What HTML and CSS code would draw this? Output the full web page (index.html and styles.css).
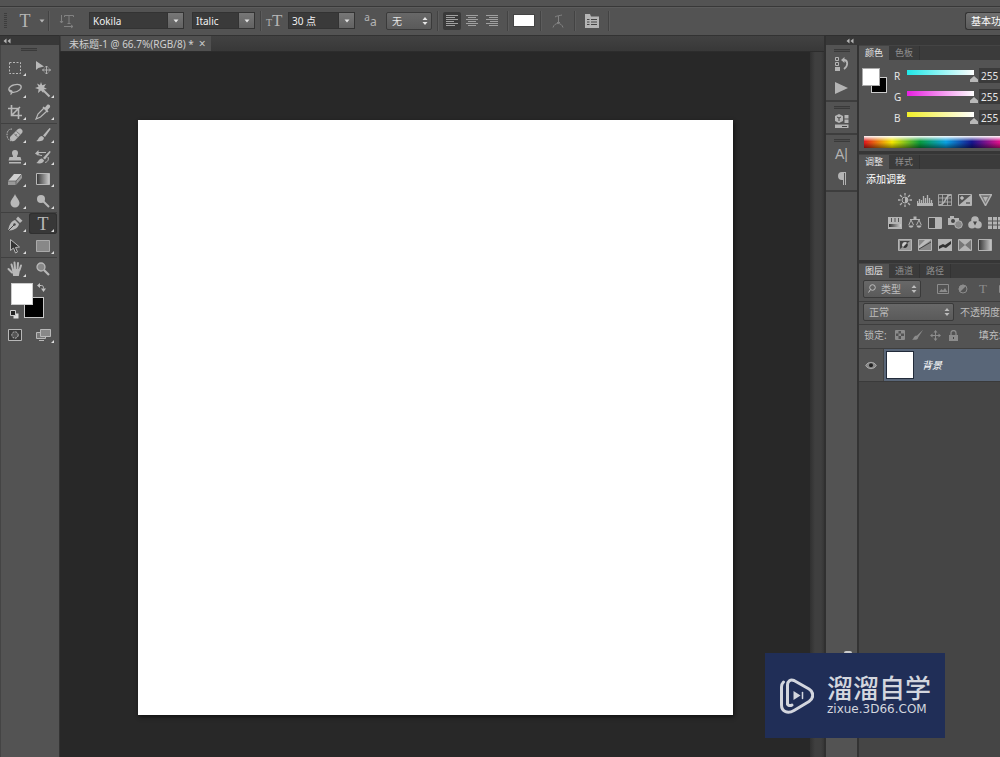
FILE: index.html
```html
<!DOCTYPE html>
<html lang="zh-CN">
<head>
<meta charset="utf-8">
<title>未标题-1 @ 66.7%(RGB/8)</title>
<link rel="stylesheet" href="styles.css">
</head>
<body>
<svg class="defs" aria-hidden="true">
  <defs>
    <linearGradient id="fade"><stop offset="0" stop-color="#333"/><stop offset="1" stop-color="#ccc"/></linearGradient>
  </defs>
  <symbol id="spin" viewBox="0 0 6 8"><path d="M3 0l2.500 3h-5zM3 8L.5 5h5z" fill="currentColor"/></symbol>
  <symbol id="down" viewBox="0 0 6 4"><path d="M.5.5h5L3 3.500z" fill="currentColor"/></symbol>
  <symbol id="rewind" viewBox="0 0 8 6"><path d="M3.500 .5v5L.5 3zM7.500 .5v5l-3-2.500z" fill="currentColor"/></symbol>
</svg>
<div class="app">
  <div class="menu-edge"></div>
  <header class="options">
    <span class="grip-v"></span>
    <button class="opt tool-pick" aria-label="横排文字工具"><span class="serif big">T</span><svg width="6" height="4"><use href="#down"/></svg></button>
    <i class="rule"></i>
    <button class="opt orient dim" aria-label="切换文本取向"><svg width="16" height="16" viewBox="0 0 16 16" fill="none" stroke="currentColor"><path d="M2.500 2v8m-1.500-2l1.500 2 1.500-2M5.500 4V2.500h9V4M10 2.500v8M8.500 10.500h3M5 13.500h9m-2-1.500l2 1.500-2 1.500"/></svg></button>
    <div class="combo family"><input aria-label="字体" value="Kokila"><button aria-label="字体列表"><svg width="6" height="4"><use href="#down"/></svg></button></div>
    <div class="combo style"><input aria-label="字体样式" value="Italic"><button aria-label="样式列表"><svg width="6" height="4"><use href="#down"/></svg></button></div>
    <i class="rule"></i>
    <span class="opt size-icon serif"><small>T</small>T</span>
    <div class="combo size"><input aria-label="字号" value="30 点"><button aria-label="字号列表"><svg width="6" height="4"><use href="#down"/></svg></button></div>
    <span class="opt aa-icon"><sup>a</sup>a</span>
    <span class="pick alias"><select aria-label="消除锯齿"><option>无</option></select><svg width="6" height="8"><use href="#spin"/></svg></span>
    <i class="rule"></i>
    <div class="aligns">
      <button class="on" aria-label="左对齐"><svg width="12" height="12" viewBox="0 0 12 12" stroke="currentColor"><path d="M0 .5h12M0 2.500h9M0 4.500h12M0 6.500h8M0 8.500h12M0 10.500h9"/></svg></button>
      <button aria-label="居中"><svg width="12" height="12" viewBox="0 0 12 12" stroke="currentColor"><path d="M0 .5h12M2 2.500h8M0 4.500h12M2 6.500h8M0 8.500h12M2 10.500h8"/></svg></button>
      <button aria-label="右对齐"><svg width="12" height="12" viewBox="0 0 12 12" stroke="currentColor"><path d="M0 .5h12M3 2.500h9M0 4.500h12M4 6.500h8M0 8.500h12M3 10.500h9"/></svg></button>
    </div>
    <i class="rule"></i>
    <button class="text-color" aria-label="文本颜色"></button>
    <i class="rule"></i>
    <button class="opt warp dim" aria-label="变形文字"><svg width="12" height="14" viewBox="0 0 12 14" fill="none" stroke="currentColor"><path d="M3 3c1-1 5-1.500 7-2M6.500 2v6M5 8.500h3M1 13.500c1-3 3-4 5-4s4 1 5 4" /></svg></button>
    <i class="rule"></i>
    <button class="opt panels" aria-label="字符和段落面板"><svg width="14" height="14" viewBox="0 0 14 14"><path d="M0 0h5l1 2.500h8V14H0z" fill="currentColor"/><path d="M2 5.500h2.500M6 5.500h6M2 8h2.500M6 8h6M2 10.500h2.500M6 10.500h6" stroke="#444"/></svg></button>
    <i class="rule"></i>
    <button class="workspace">基本功能</button>
  </header>

  <div class="work">
    <aside class="toolbox">
      <div class="strip"><svg width="8" height="6"><use href="#rewind"/></svg></div>
      <div class="tools">
        <span class="grip"></span>
        <div class="group first">
          <button class="more" aria-label="矩形选框"><svg width="16" height="16" viewBox="0 0 16 16"><path d="M2.500 2.500h11v11h-11z" fill="none" stroke="currentColor" stroke-dasharray="2 1.500"/></svg></button>
          <button aria-label="移动"><svg width="16" height="16" viewBox="0 0 16 16"><path d="M1 1v9l2.300-2L9 6.500z" fill="currentColor"/><path d="M11.500 6v8M7.500 10h8M10 7.500L11.500 6 13 7.500M10 12.500l1.500 1.500 1.500-1.500M9 8.500L7.500 10 9 11.500M14 8.500l1.500 1.500-1.500 1.500" fill="none" stroke="currentColor" stroke-width=".9"/></svg></button>
          <button class="more" aria-label="套索"><svg width="16" height="16" viewBox="0 0 16 16" fill="none" stroke="currentColor" stroke-width="1.300"><path d="M4 10C0 8 2 4 7 2.800s8 .2 7 3.200-6 5-10 4c-2-.5-1.500-2 0-1.500s1.500 2-.5 4"/></svg></button>
          <button class="more" aria-label="魔棒"><svg width="16" height="16" viewBox="0 0 16 16"><path d="M6 0l1.200 3.300L11 2 9 5.200l3 1.800-3.500.6L8.300 11 6 8.500 3 11l.6-3.700L0 6l3.500-1.200L2 1.500l3 1.600z" fill="currentColor"/><path d="M7 7l7.500 7.500" stroke="currentColor" stroke-width="2"/></svg></button>
          <button class="more" aria-label="裁剪"><svg width="16" height="16" viewBox="0 0 16 16" fill="none" stroke="currentColor" stroke-width="1.600"><path d="M4.500 1v10.500H15M1 4.500h10.500V15M5 11L13 3"/></svg></button>
          <button class="more" aria-label="吸管"><svg width="16" height="16" viewBox="0 0 16 16"><path d="M9 4L3 10l-2 5 4.500-2L12 7" fill="none" stroke="currentColor" stroke-width="1.200"/><path d="M7.500 3.500l1-1 1.500 1L12 1c2-1.500 4 .8 2.800 2.600L12.500 6l1 1.500-1 1z" fill="currentColor"/></svg></button>
        </div>
        <div class="group">
          <button class="more" aria-label="修复画笔"><svg width="18" height="16" viewBox="0 0 18 16"><path d="M6 2C2 2 1 5 1 8s2 6 5 6" fill="none" stroke="currentColor" stroke-dasharray="1.500 1"/><path d="M4.500 9.500l7.500-7.500c2.500-2 6 1.500 4 4L9 13.500c-3 2.300-6.500-1-4.500-4z" fill="currentColor"/><path d="M8 6.500l4 4M10.500 4.500l4 3.500M9 8.500l2-1" stroke="#666" stroke-width=".8"/></svg></button>
          <button class="more" aria-label="画笔"><svg width="16" height="16" viewBox="0 0 16 16" fill="currentColor"><path d="M14.500 1c1 0 1.300.8 1 1.300L10 10 8 8.500zM7 9l2 1.800c0 3-3.500 4.200-8 3.200C3.500 13.500 3.500 9 7 9z"/></svg></button>
          <button class="more" aria-label="仿制图章"><svg width="14" height="16" viewBox="0 0 14 16" fill="currentColor"><path d="M5 8c0-2-1-2-1-4a3 3 0 016 0c0 2-1 2-1 4h3.500l1 3.500H.5l1-3.500zM1 13h12v1.500H1z"/></svg></button>
          <button class="more" aria-label="历史记录画笔"><svg width="16" height="16" viewBox="0 0 16 16" fill="currentColor"><path d="M14.500 2c1 0 1.300.8 1 1.300L10 10.500 8 9zM7 9.500l2 1.800c0 2.700-3.500 3.700-8 2.700C3.500 13.500 3.500 9.500 7 9.500z"/><path d="M3 3.500h8M3 3.500c0 2 1 3 4 3M13 8c1 3-.5 5-3 5.500" fill="none" stroke="currentColor"/><path d="M0 4.500L3.500 1v6z"/></svg></button>
          <button class="more" aria-label="橡皮擦"><svg width="16" height="14" viewBox="0 0 16 14"><path d="M7 2h8L9 9H1z" fill="#d0d0d0"/><path d="M1 9h8v4H1zM9 9l6-7v4l-6 7z" fill="#999"/><path d="M1 9h8v4M9 9l6-7" fill="none" stroke="#555" stroke-width=".7"/></svg></button>
          <button class="more" aria-label="渐变"><svg width="14" height="12" viewBox="0 0 14 12"><path d="M.5.5h13v11H.5z" fill="url(#fade)" stroke="currentColor"/></svg></button>
          <button class="more" aria-label="模糊"><svg width="12" height="14" viewBox="0 0 12 14"><path d="M6 0c1 3 4.500 6 4.500 9a4.500 4.500 0 01-9 0c0-3 3.500-6 4.500-9z" fill="currentColor"/></svg></button>
          <button class="more" aria-label="减淡"><svg width="14" height="14" viewBox="0 0 14 14"><circle cx="5" cy="5" r="4" fill="currentColor"/><path d="M7.500 7.500L13 13" stroke="currentColor" stroke-width="2"/></svg></button>
        </div>
        <div class="group">
          <button class="more" aria-label="钢笔"><svg width="16" height="16" viewBox="0 0 16 16"><path d="M1 15C2 10 3 6 8 4l4 4c-1 5-6 6-11 7zM9 3l2-2.500 4.500 4.200L13 7z" fill="currentColor"/><path d="M1 15l6-6" stroke="#444"/><circle cx="7.500" cy="8.500" r="1.200" fill="#444"/></svg></button>
          <button class="more on" aria-label="横排文字"><span class="serif big">T</span></button>
          <button class="more" aria-label="路径选择"><svg width="12" height="16" viewBox="0 0 12 16"><path d="M1.500 1.500v11l3-2.500 2 5 2-1-2-4.500 4-.5z" fill="#333" stroke="currentColor"/></svg></button>
          <button class="more" aria-label="矩形"><svg width="14" height="12" viewBox="0 0 14 12"><path d="M.5.5h13v11H.5z" fill="#888" stroke="#aaa"/></svg></button>
        </div>
        <div class="group last">
          <button class="more" aria-label="抓手"><svg width="16" height="16" viewBox="0 0 16 16" fill="none" stroke="currentColor" stroke-width="2" stroke-linecap="round"><path d="M4.500 3.500L6 8.500M7.500 1.500l.5 6M11 2l-.5 6M14 4.500L12.500 9M1.500 8L5 11.500"/><path d="M6 9h6l-1 5H7z" fill="currentColor"/></svg></button>
          <button aria-label="缩放"><svg width="14" height="14" viewBox="0 0 14 14"><circle cx="5" cy="5" r="4" fill="#888" stroke="currentColor" stroke-width="1.300"/><path d="M8 8l5 5" stroke="currentColor" stroke-width="2.200"/></svg></button>
        </div>
        <div class="colors">
          <button class="back" aria-label="背景色"></button>
          <button class="fore" aria-label="前景色"></button>
          <svg class="swap" width="9" height="9" viewBox="0 0 9 9"><path d="M2 2.500h2.500c1.500 0 2 1 2 3" fill="none" stroke="currentColor"/><path d="M0 2.500L3 0v5zM4 5.500h5L6.500 9z" fill="currentColor"/></svg>
          <svg class="reset" width="9" height="9" viewBox="0 0 9 9"><path d="M3.500 3.500h5v5h-5z" fill="#ddd"/><path d="M.5.5h5v5h-5z" fill="#222" stroke="#ccc"/></svg>
        </div>
        <div class="group last modes">
          <button aria-label="快速蒙版"><svg width="14" height="12" viewBox="0 0 14 12"><path d="M.5.5h13v11H.5z" fill="#3a3a3a" stroke="currentColor"/><circle cx="7" cy="6" r="3.200" fill="#555" stroke="currentColor" stroke-dasharray="2 1"/></svg></button>
          <button class="more" aria-label="屏幕模式"><svg width="15" height="12" viewBox="0 0 15 12"><path d="M.5 3.500h9v6h-9zM3 11.500h5" fill="#777" stroke="currentColor"/><path d="M4.500.5h10v7h-10z" fill="#888" stroke="currentColor"/></svg></button>
        </div>
      </div>
    </aside>

    <main class="document">
      <div class="tabs"><div class="tab">未标题-1 @ 66.7%(RGB/8) * <button aria-label="关闭">×</button></div></div>
      <div class="stage">
        <div class="pasteboard"><div class="canvas"></div></div>
        <div class="scroll"></div>
      </div>
    </main>

    <aside class="dock">
      <div class="strip"><svg width="8" height="6"><use href="#rewind"/></svg></div>
      <div class="columns">
        <nav class="icons">
          <div class="set"><span class="grip"></span>
            <button aria-label="历史记录"><svg width="14" height="14" viewBox="0 0 14 14"><path d="M.5.5h3v3h-3zM.5 5.500h3v3h-3z" fill="none" stroke="currentColor"/><path d="M0 10h5v4H0zM6 3l3.500-3v6z" fill="currentColor"/><path d="M9 3c4 0 4.500 6 0 9" fill="none" stroke="currentColor" stroke-width="1.800"/></svg></button>
            <button aria-label="动作"><svg width="13" height="12" viewBox="0 0 13 12"><path d="M0 0l13 6-13 6z" fill="currentColor"/></svg></button>
          </div>
          <div class="set"><span class="grip"></span>
            <button aria-label="属性"><svg width="14" height="14" viewBox="0 0 14 14" fill="currentColor"><path d="M4 0l4 2v5L4 9 0 7V2z"/><path d="M2 3l2 1 2-1M4 4v3" fill="none" stroke="#444"/><path d="M9.500 1h4v3.500h-4zM9.500 5.500h4V9h-4zM0 10.500h13.500V14H0z"/><path d="M7 12.500h5" stroke="#444"/></svg></button>
          </div>
          <div class="set"><span class="grip"></span>
            <button aria-label="字符">A|</button>
            <button aria-label="段落"><svg width="9" height="13" viewBox="0 0 9 13"><path d="M5 0h4v13H8V1H7v12H6V8H5a4 4 0 010-8z" fill="currentColor"/></svg></button>
          </div>
        </nav>

        <div class="panels-col">
          <section class="panel">
            <div class="panel-tabs"><button class="on">颜色</button><button>色板</button></div>
            <div class="color-body">
              <div class="pair"><button class="back" aria-label="背景色"></button><button class="fore" aria-label="前景色"></button></div>
              <div class="channels">
                <div class="channel"><label for="r">R</label><input id="r" class="cyan" type="range" max="255" value="255"><input aria-label="R 值" value="255"></div>
                <div class="channel"><label for="g">G</label><input id="g" class="magenta" type="range" max="255" value="255"><input aria-label="G 值" value="255"></div>
                <div class="channel"><label for="b">B</label><input id="b" class="yellow" type="range" max="255" value="255"><input aria-label="B 值" value="255"></div>
              </div>
            </div>
            <div class="spectrum"></div>
          </section>

          <section class="panel">
            <div class="panel-tabs"><button class="on">调整</button><button>样式</button></div>
            <h2>添加调整</h2>
            <div class="adjust">
              <button aria-label="亮度/对比度"><svg width="14" height="14" viewBox="0 0 14 14"><circle cx="7" cy="7" r="3" fill="none" stroke="currentColor"/><path d="M7 4a3 3 0 010 6z" fill="currentColor"/><path d="M7 0v2.500M7 11.500V14M0 7h2.500M11.500 7H14M2 2l2 2M10 10l2 2M12 2l-2 2M4 10l-2 2" stroke="currentColor" stroke-width="1.300"/></svg></button>
              <button aria-label="色阶"><svg width="16" height="11" viewBox="0 0 16 11"><path d="M.5 9V6M2.500 9V4M4.500 9V5M6.500 9V1M8.500 9V3M10.500 9V0M12.500 9V3M14.500 9V5" stroke="currentColor" stroke-width="1.300"/><path d="M0 8h16v3H0z" fill="currentColor"/></svg></button>
              <button aria-label="曲线"><svg width="14" height="12" viewBox="0 0 14 12" fill="none" stroke="currentColor"><path d="M.5.5h13v11H.5zM.5 4h13M.5 8h13M4.500.5v11M9.500.5v11" stroke-width=".8"/><path d="M1 11c8 0 5-10 12-10" stroke-width="1.500"/></svg></button>
              <button aria-label="曝光度"><svg width="14" height="12" viewBox="0 0 14 12"><path d="M.5.5h13v11H.5z" fill="#555" stroke="currentColor"/><path d="M13 1v10H1z" fill="currentColor"/><path d="M2 4h4M4 2v4" stroke="#ddd"/><path d="M8 9h4" stroke="#333"/></svg></button>
              <button aria-label="自然饱和度"><svg width="13" height="12" viewBox="0 0 13 12"><path d="M.5.5h12l-6 11z" fill="#777" stroke="currentColor" stroke-width="1.500"/><path d="M4 3h5L6.500 8z" fill="currentColor"/></svg></button>
            </div>
            <div class="adjust wide">
              <button aria-label="色相/饱和度"><svg width="14" height="12" viewBox="0 0 14 12"><path d="M0 0h14v12H0z" fill="currentColor"/><path d="M3.500 1v4M7 1v4M10.500 1v4" stroke="#555"/><path d="M1 7h12v3H1z" fill="url(#fade)"/></svg></button>
              <button aria-label="色彩平衡"><svg width="14" height="13" viewBox="0 0 14 13" fill="none" stroke="currentColor"><path d="M7 1v3M2 3.500h10M3 4L.8 9M3 4l2.500 5M11 4L8.500 9M11 4l2.300 5"/><path d="M.5 9.500h5c-.5 3-4.500 3-5 0zM8.500 9.500h5c-.5 3-4.500 3-5 0zM5.500.5h3v2.500h-3z" fill="currentColor" stroke="none"/></svg></button>
              <button aria-label="黑白"><svg width="14" height="12" viewBox="0 0 14 12"><path d="M.5.5h13v11H.5z" fill="#4a4a4a" stroke="currentColor"/><path d="M7 1h6v10H7z" fill="currentColor"/></svg></button>
              <button aria-label="照片滤镜"><svg width="15" height="13" viewBox="0 0 15 13"><path d="M0 2h2V0h4v2h5v7H0z" fill="currentColor"/><circle cx="5" cy="5" r="2" fill="#444"/><circle cx="10.500" cy="8.500" r="3.800" fill="#888" stroke="currentColor"/></svg></button>
              <button aria-label="通道混合器"><svg width="14" height="13" viewBox="0 0 14 13"><g fill="currentColor"><circle cx="7" cy="4" r="3.800"/><circle cx="4" cy="8.800" r="3.800"/><circle cx="10" cy="8.800" r="3.800"/></g><path d="M5 5.500h4L7 9.500z" fill="#444"/></svg></button>
              <button aria-label="颜色查找"><svg width="14" height="12" viewBox="0 0 14 12"><path d="M0 0h14v12H0z" fill="currentColor"/><path d="M0 4h14M0 8h14M4.500 0v12M9.500 0v12" stroke="#555"/></svg></button>
            </div>
            <div class="adjust">
              <button aria-label="反相"><svg width="14" height="12" viewBox="0 0 14 12"><path d="M.5.5h13v11H.5z" fill="#999" stroke="currentColor"/><path d="M2 10V2h10z" fill="#444"/><path d="M7 3a3 3 0 00-2 5.200L9.200 4A3 3 0 007 3z" fill="#ccc"/><path d="M9.200 4A3 3 0 015 8.200z" fill="#333"/></svg></button>
              <button aria-label="色调分离"><svg width="14" height="12" viewBox="0 0 14 12"><path d="M.5.5h13v11H.5z" fill="#888" stroke="currentColor"/><path d="M1 7l6-6h6L1 10z" fill="#bbb"/><path d="M1 10L13 3" stroke="#444"/></svg></button>
              <button aria-label="阈值"><svg width="14" height="12" viewBox="0 0 14 12"><path d="M0 0h14v12H0z" fill="currentColor"/><path d="M1 7l4-2 2 1 6-4v3L8 9 5 8l-4 2z" fill="#333"/></svg></button>
              <button aria-label="可选颜色"><svg width="14" height="12" viewBox="0 0 14 12"><path d="M.5.5h13v11H.5z" fill="#777" stroke="currentColor"/><path d="M1 1l6 5 6-5zM1 11l6-5 6 5z" fill="currentColor"/></svg></button>
              <button aria-label="渐变映射"><svg width="14" height="12" viewBox="0 0 14 12"><path d="M.5.5h13v11H.5z" fill="url(#fade)" stroke="currentColor"/></svg></button>
            </div>
          </section>

          <section class="panel layers">
            <div class="panel-tabs"><button class="on">图层</button><button>通道</button><button>路径</button></div>
            <div class="layer-row filter">
              <span class="pick kind"><svg class="lens" width="8" height="9" viewBox="0 0 8 9" fill="none" stroke="currentColor"><circle cx="4.500" cy="3.500" r="2.800"/><path d="M2.500 5.500L.5 8.500"/></svg><select aria-label="滤镜类型"><option>类型</option></select><svg width="6" height="8"><use href="#spin"/></svg></span>
              <div class="kinds">
                <button aria-label="像素"><svg width="12" height="10" viewBox="0 0 12 10"><path d="M.5.5h11v9H.5z" fill="none" stroke="currentColor"/><path d="M2 8l2.500-3L6 6.500 8 4l2.500 4z" fill="currentColor"/></svg></button>
                <button aria-label="调整"><svg width="10" height="10" viewBox="0 0 10 10"><circle cx="5" cy="5" r="4" fill="none" stroke="currentColor"/><path d="M2 8A4 4 0 018 2z" fill="currentColor"/></svg></button>
                <button class="serif" aria-label="文字">T</button>
                <button aria-label="形状"><svg width="12" height="10" viewBox="0 0 12 10"><path d="M2.500 1.500h7v7h-7z" fill="none" stroke="currentColor"/></svg></button>
              </div>
            </div>
            <div class="layer-row blend">
              <span class="pick mode"><select aria-label="混合模式"><option>正常</option></select><svg width="6" height="8"><use href="#spin"/></svg></span>
              <span>不透明度:</span>
            </div>
            <div class="layer-row lock">
              <span>锁定:</span>
              <div class="locks">
                <button aria-label="透明像素"><svg width="10" height="10" viewBox="0 0 10 10"><path d="M.5.5h9v9h-9z" fill="none" stroke="currentColor"/><path d="M1 1h2.500v2.500H1zM6 1h3v2.500H6zM3.500 3.500H6V6H3.500zM1 6h2.500v3H1zM6 6h3v3H6z" fill="currentColor"/></svg></button>
                <button aria-label="图像像素"><svg width="13" height="12" viewBox="0 0 16 16" fill="currentColor"><path d="M15.500 1L9 11 7 9zM6.500 8.500l2.500 2.500c0 3-3.500 4.200-8.500 3C3 13.500 3 9 6.500 8.500z"/></svg></button>
                <button aria-label="位置"><svg width="11" height="11" viewBox="0 0 11 11"><path d="M5.500 2v7M2 5.500h7" stroke="currentColor"/><path d="M5.500 0l2 2.500h-4zM5.500 11l2-2.500h-4zM0 5.500l2.500-2v4zM11 5.500l-2.500-2v4z" fill="currentColor"/></svg></button>
                <button aria-label="全部"><svg width="9" height="11" viewBox="0 0 9 11"><path d="M0 5h9v6H0z" fill="currentColor"/><path d="M2 5V3a2.500 2.500 0 015 0v2" fill="none" stroke="currentColor" stroke-width="1.300"/><path d="M4.500 7v2" stroke="#444"/></svg></button>
              </div>
              <span>填充:</span>
            </div>
            <div class="layer">
              <button class="eye" aria-label="可见性"><svg width="12" height="9" viewBox="0 0 12 9"><path d="M.7 4.500C3 .3 9 .3 11.300 4.500 9 8.700 3 8.700.7 4.500z" fill="#888" stroke="currentColor"/><circle cx="6" cy="4.300" r="2" fill="#222"/></svg></button>
              <div class="layer-main"><span class="thumb"></span><em>背景</em></div>
            </div>
          </section>
        </div>
      </div>
    </aside>
  </div>

  <div class="watermark">
    <svg width="34" height="36" viewBox="0 0 34 36" fill="none" stroke="#d3d6de" stroke-width="3" stroke-linecap="round" stroke-linejoin="round"><path d="M7.500 26V7c0-4 3-6 6.500-4.500L29 11c5 3 5 9 0 12.500L14 32.500C8 36 1.500 34 1.500 27V9c0-3 1-4 2-5"/><path d="M7.500 25c0 3 3 3 4.500 2"/><path d="M13.500 13l7 4.500-7 4.500z" fill="#d3d6de" stroke="none"/><path d="M22.500 14.500v6" stroke-width="1.500"/></svg>
    <div><strong>溜溜自学</strong><span>zixue.3D66.COM</span></div>
  </div>
</div>
</body>
</html>
```

FILE: styles.css
```css
* { box-sizing: border-box; }
body {
  margin: 0;
  background: #282828;
  color: #e6e6e6;
  font: 10px/14px "Noto Sans", "Noto Sans CJK SC", sans-serif;
}
button, input, select {
  margin: 0;
  padding: 0;
  border: 0;
  border-radius: 0;
  background: none;
  color: inherit;
  font: inherit;
  appearance: none;
}
button { display: flex; align-items: center; justify-content: center; }
svg { display: block; flex: none; }
.defs { position: absolute; width: 0; height: 0; }
.serif { font-family: "Liberation Serif", serif; }
.big { font-size: 18px; line-height: 18px; }
.dim { color: #828282; }

.app {
  position: relative;
  display: flex;
  flex-direction: column;
  height: 100vh;
  overflow: hidden;
}
.menu-edge { height: 7px; flex: none; background: #535353; border-bottom: 1px solid #383838; }

/* Options bar */
.options {
  display: flex;
  align-items: center;
  flex: none;
  height: 28px;
  padding-bottom: 2px;
  background: #535353;
  border-top: 1px solid #5c5c5c;
}
.rule { flex: none; width: 2px; height: 20px; background: #434343; border-right: 1px solid #5c5c5c; }
.grip-v { width: 3px; height: 16px; margin: 0 9px 0 4px; background: repeating-linear-gradient(#3d3d3d 0 1px, #535353 1px 2px); }
.opt { flex: none; color: #b5b5b5; height: 20px; }
.tool-pick { width: 32px; gap: 8px; }
.orient { width: 34px; margin-right: 5px; color: #828282; }
.combo {
  display: flex;
  flex: none;
  height: 17px;
  border: 1px solid #333;
}
.combo input { flex: 1; min-width: 0; padding-left: 3px; background: #3a3a3a; color: #f0f0f0; }
.combo button { width: 16px; background: linear-gradient(#777, #626262); border-left: 1px solid #333; }
.family { width: 95px; margin-right: 8px; }
.style { width: 63px; margin-right: 5px; }
.size { width: 67px; }
.size-icon { width: 26px; padding-left: 4px; font-size: 17px; line-height: 20px; }
.size-icon small { font-size: 10px; }
.aa-icon { width: 31px; text-align: center; font-size: 12px; line-height: 22px; }
.aa-icon sup { font-size: 10px; line-height: 10px; }
.pick {
  display: grid;
  align-items: center;
  flex: none;
  height: 18px;
  border: 1px solid #3a3a3a;
  border-radius: 2px;
  background: linear-gradient(#686868, #5a5a5a);
}
.pick select, .pick svg { grid-area: 1 / 1; }
.pick select { width: 100%; height: 100%; padding-left: 5px; }
.pick svg { justify-self: end; margin-right: 3px; pointer-events: none; }
.alias { width: 46px; margin-right: 5px; }
.aligns { display: flex; gap: 2px; margin: 0 6px 0 4px; color: #a0a0a0; }
.aligns button { width: 18px; height: 18px; border-radius: 2px; }
.aligns .on { background: #3a3a3a; }
.text-color { width: 22px; height: 13px; margin: 0 5px 0 4px; background: #fff; border: 1px solid #444; }
.warp { width: 32px; color: #828282; }
.panels { width: 32px; }
.workspace {
  justify-content: flex-start;
  width: 35px;
  height: 18px;
  margin-left: auto;
  padding-left: 5px;
  overflow: hidden;
  white-space: nowrap;
  border: 1px solid #333;
  border-right: 0;
  border-radius: 3px 0 0 3px;
  background: linear-gradient(#707070, #5c5c5c);
  color: #fff;
}

/* Work area */
.work { display: flex; flex: 1; min-height: 0; }
.strip {
  display: flex;
  align-items: center;
  flex: none;
  height: 10px;
  background: #383838;
  border-top: 1px solid #2f2f2f;
  color: #b4b4b4;
}
.grip {
  display: block;
  width: 16px;
  height: 3px;
  margin: 0 auto;
  background: repeating-linear-gradient(#3a3a3a 0 1px, #4c4c4c 1px 2px);
}

.toolbox { display: flex; flex-direction: column; width: 60px; flex: none; border-right: 1px solid #333; }
.toolbox .strip { padding-left: 3px; }
.tools { flex: 1; padding: 3px 2px 0 0; background: #535353; border-left: 1px solid #444; }
.group {
  display: grid;
  grid-template-columns: 28px 28px;
  grid-auto-rows: 21px;
  row-gap: 1px;
  padding-bottom: 1px;
  border-bottom: 1px solid #404040;
  color: #b8b8b8;
}
.first { padding-top: 6px; }
.last { border: 0; }
.group button { position: relative; }
.group .on { background: #383838; border-radius: 3px; box-shadow: inset 0 0 0 1px #303030; }
.more::after {
  content: "";
  position: absolute;
  right: 3px;
  bottom: 2px;
  border: solid transparent;
  border-width: 3px 0 0 3px;
  border-right: 3px solid #ddd;
  border-top-color: transparent;
}
.colors { position: relative; height: 44px; color: #c2c2c2; }
.colors button, .colors svg { position: absolute; }
.colors .fore { left: 10px; top: 3px; width: 22px; height: 22px; background: #fff; border: 1px solid #ccc; }
.colors .back { left: 23px; top: 17px; width: 20px; height: 21px; background: #000; border: 1px solid #c8c8c8; }
.colors .swap { left: 36px; top: 3px; }
.colors .reset { left: 9px; top: 30px; }

.document { display: flex; flex-direction: column; flex: 1; min-width: 0; }
.tabs { display: flex; flex: none; height: 17px; background: linear-gradient(#424242, #383838); border-top: 1px solid #333; border-bottom: 1px solid #2c2c2c; }
.tab {
  display: flex;
  align-items: center;
  gap: 5px;
  min-width: 150px;
  padding: 0 4px 0 8px;
  margin-left: 1px;
  white-space: nowrap;
  background: #505050;
  color: #cfcfcf;
}
.tab button { color: #c8c8c8; font-size: 12px; }
.stage { display: flex; flex: 1; min-height: 0; }
.pasteboard { display: flex; flex: 1; padding: 68px 77px 42px 78px; background: #282828; }
.canvas { flex: 1; background: #fff; box-shadow: 1px 2px 4px #111; }
.scroll { width: 14px; background: linear-gradient(90deg, #303030, #3f3f3f 5px 11px, #363636); }

/* Dock */
.dock { display: flex; flex-direction: column; flex: none; width: 176px; border-left: 2px solid #303030; }
.dock .strip { padding-left: 20px; }
.columns { display: flex; flex: 1; min-height: 0; }
.icons { width: 33px; flex: none; background: #535353; border-right: 2px solid #333; }
.set { padding-top: 4px; border-bottom: 2px solid #3d3d3d; color: #b4b4b4; }
.set button { width: 100%; height: 24px; font: 14px/24px "Liberation Sans", sans-serif; }
.panels-col { display: flex; flex-direction: column; flex: 1; min-width: 0; overflow: hidden; background: #454545; }
.panel { background: #535353; border-bottom: 3px solid #363636; }
.panel-tabs { display: flex; height: 15px; background: #3b3b3b; border-top: 1px solid #444; }
.panel-tabs button { width: 31px; color: #8f8f8f; border-right: 1px solid #333; font-size: 9px; white-space: nowrap; }
.panel-tabs .on { width: 30px; background: #535353; color: #e6e6e6; border-right: 0; }
.color-body { display: flex; height: 76px; padding-top: 5px; }
.pair { position: relative; width: 35px; flex: none; }
.pair button { position: absolute; width: 16px; height: 16px; }
.pair .fore { left: 4px; top: 4px; background: #fff; outline: 1px solid #aaa; }
.pair .back { left: 12px; top: 12px; background: #000; border: 1px solid #ccc; }
.channels { display: flex; flex-direction: column; flex: none; }
.channel { display: flex; align-items: center; height: 21px; }
.channel label { width: 13px; }
.channel input[type="range"] { width: 71px; height: 14px; margin-right: 1px; }
.channel input[type="range"]::-webkit-slider-runnable-track {
  height: 5px;
  margin-bottom: 6px;
  background: linear-gradient(90deg, var(--hue), #fff) no-repeat 0 0 / calc(100% - 4px) 100%;
}
.channel input[type="range"]::-webkit-slider-thumb {
  appearance: none;
  width: 8px;
  height: 6px;
  margin-top: 6px;
  background: #b8b8b8;
  clip-path: polygon(50% 0, 100% 60%, 100% 100%, 0 100%, 0 60%);
}
.cyan { --hue: #1fe8e8; }
.magenta { --hue: #e81fe0; }
.yellow { --hue: #f2ef28; }
.channel input:not([type="range"]) { width: 30px; height: 15px; padding-left: 2px; background: #3b3b3b; }
.spectrum {
  height: 12px;
  margin: 0 0 3px 5px;
  background:
    linear-gradient(#fff 0, transparent 45%, transparent 55%, #0007 100%),
    linear-gradient(90deg, #e0161c 0, #f3e600 28px, #089a3c 56px, #0aa0e0 82px, #14148c 108px, #e5108a 136px);
}
.panel h2 { margin: 0; padding: 3px 0 0 7px; height: 20px; font-size: 10px; line-height: 14px; font-weight: 400; color: #fff; }
.adjust { display: flex; height: 22px; padding-left: 36px; color: #b4b4b4; }
.adjust.wide { height: 23px; padding-left: 26px; }
.adjust button { width: 20px; flex: none; }
.adjust:last-child { height: 26px; padding-bottom: 4px; }

.layers { border: 0; white-space: nowrap; }
.layer-row { display: flex; align-items: center; height: 24px; padding: 0 0 2px 4px; border-bottom: 1px solid #3e3e3e; color: #bdbdbd; overflow: hidden; }
.kind { width: 58px; }
.kind select { padding-left: 17px; }
.kind .lens { justify-self: start; margin-left: 4px; }
.mode { width: 91px; margin-right: 6px; }
.kinds { display: flex; margin-left: 12px; color: #8c8c8c; }
.kinds button { width: 20px; flex: none; font-size: 13px; }
.blend { height: 23px; }
.lock { padding: 0 0 3px 5px; }
.locks { display: flex; margin: 0 16px 0 4px; color: #8c8c8c; }
.locks button { width: 18px; flex: none; }
.layer { display: flex; height: 33px; border-bottom: 1px solid #3a3a3a; }
.eye { width: 25px; border-right: 1px solid #444; color: #aaa; }
.layer-main { display: flex; align-items: center; flex: 1; gap: 8px; padding-left: 2px; background: #596678; color: #fff; }
.thumb { width: 28px; height: 28px; flex: none; background: #fff; border: 1px solid #222b3a; }

.watermark {
  position: absolute;
  right: 55px;
  bottom: 19px;
  display: flex;
  align-items: center;
  gap: 13px;
  width: 180px;
  height: 85px;
  padding-left: 15px;
  background: #202e57;
  color: #d3d6de;
}
.watermark::before {
  content: "";
  position: absolute;
  left: 79px;
  top: -2px;
  width: 8px;
  height: 2px;
  border-radius: 4px 4px 0 0;
  background: #ccc;
}
.watermark strong, .watermark span { display: block; white-space: nowrap; }
.watermark strong { font: 500 26px/24px "Noto Sans CJK SC", sans-serif; }
.watermark span { margin-top: 3px; font: 12px/14px "DejaVu Sans", sans-serif; }
```
